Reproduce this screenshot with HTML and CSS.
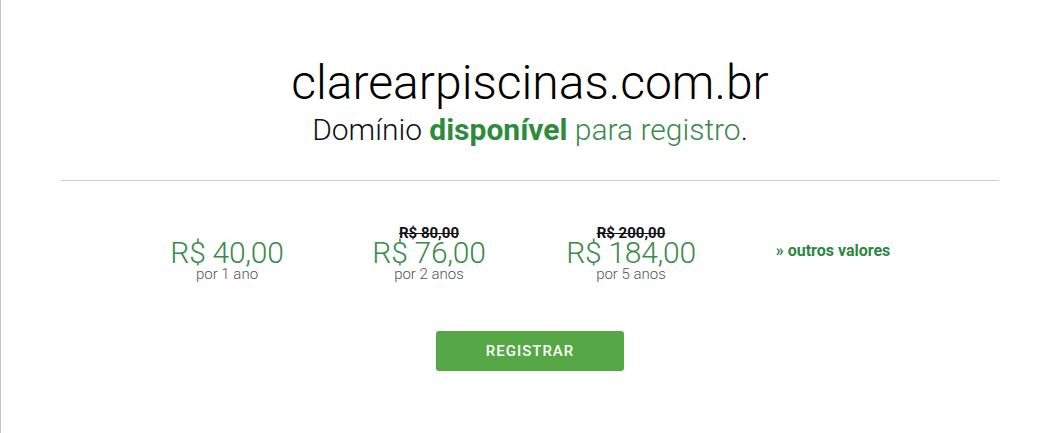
FILE: index.html
```html
<!DOCTYPE html>
<html lang="pt-BR">
<head>
<meta charset="utf-8">
<title>clarearpiscinas.com.br</title>
<link rel="stylesheet" href="styles.css">
</head>
<body>
<div class="page">
  <main class="wrap">
    <header class="head">
      <h1 class="domain">clarearpiscinas.com.br</h1>
      <p class="status">Domínio <strong>disponível</strong> <span class="soft">para registro</span>.</p>
    </header>
    <hr class="rule">
    <section class="prices">
      <div class="price">
        <span class="old"></span>
        <span class="value">R$ 40,00</span>
        <span class="period">por 1 ano</span>
      </div>
      <div class="price">
        <span class="old">R$ 80,00</span>
        <span class="value">R$ 76,00</span>
        <span class="period">por 2 anos</span>
      </div>
      <div class="price">
        <span class="old">R$ 200,00</span>
        <span class="value">R$ 184,00</span>
        <span class="period">por 5 anos</span>
      </div>
      <div class="price more">
        <a class="others" href="#">» outros valores</a>
      </div>
    </section>
    <div class="actions">
      <a class="btn" href="#">REGISTRAR</a>
    </div>
  </main>
</div>
</body>
</html>
```
FILE: styles.css
```css
html, body {
  margin: 0;
  padding: 0;
  background: #fff;
}
body {
  font-family: Roboto, "Liberation Sans", sans-serif;
  color: #111;
}
.page {
  border-left: 1px solid #c4c4c4;
  min-height: 433px;
  box-sizing: border-box;
}
.wrap {
  margin-left: 60px;
  width: 938px;
}
.head {
  text-align: center;
  padding-top: 55px;
}
.domain {
  margin: 0;
  font-weight: 300;
  font-size: 48px;
  line-height: 56px;
  color: #000;
}
.status {
  margin: 0;
  font-weight: 300;
  font-size: 30px;
  line-height: 38px;
  color: #111;
}
.status strong {
  font-weight: 700;
  color: #2e8b3e;
}
.status .soft {
  color: #3b8a4a;
}
.rule {
  border: 0;
  border-top: 1px solid #cfcfcf;
  margin: 31px 0 0;
  height: 0;
}
.prices {
  display: flex;
  justify-content: center;
  padding-top: 45px;
}
.price {
  width: 202px;
  display: flex;
  flex-direction: column;
  align-items: center;
  text-align: center;
}
.old {
  height: 14px;
  font-size: 15px;
  line-height: 14px;
  font-weight: 700;
  color: #111;
  text-decoration: line-through;
}
.value {
  font-size: 30px;
  font-weight: 300;
  line-height: 25px;
  letter-spacing: -0.25px;
  color: #3a8a4a;
}
.period {
  margin-top: 5px;
  font-size: 15px;
  font-weight: 300;
  line-height: 9px;
  color: #555;
}
.more {
  padding-top: 15px;
}
.others {
  font-size: 16px;
  line-height: 19px;
  font-weight: 700;
  color: #2e8540;
  text-decoration: none;
}
.actions {
  display: flex;
  justify-content: center;
  padding-top: 52px;
}
.btn {
  display: block;
  width: 188px;
  height: 40px;
  line-height: 40px;
  text-align: center;
  background: #55a845;
  color: #fff;
  border-radius: 3px;
  font-size: 15px;
  font-weight: 500;
  letter-spacing: 1px;
  text-decoration: none;
}
```
